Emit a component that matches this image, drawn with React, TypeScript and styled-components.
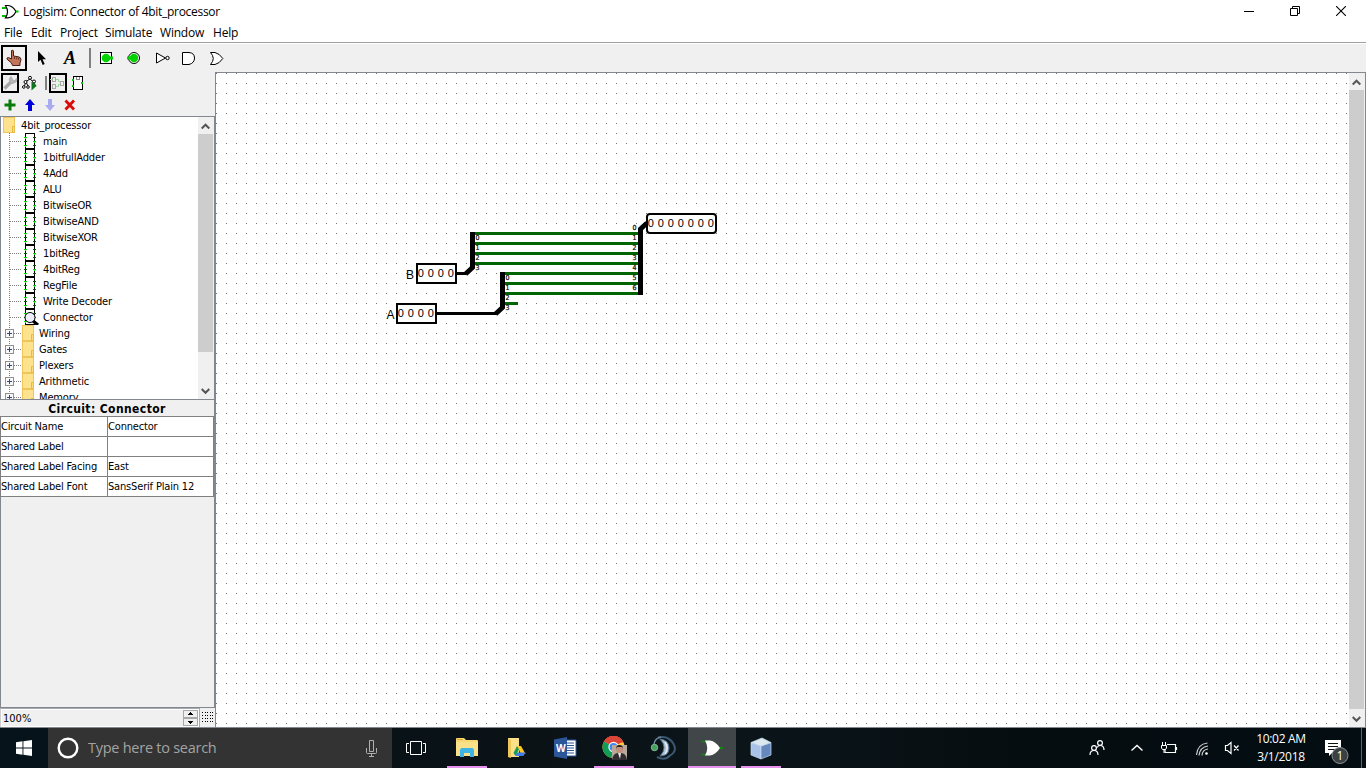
import React from "react";
import styled, { createGlobalStyle } from "styled-components";

const UI = `"DejaVu Sans Condensed", "DejaVu Sans", sans-serif`;
const SEGOE = `"Open Sans", "Noto Sans", sans-serif`;
const PLAIN = `"Liberation Sans", Arial, sans-serif`;
const EDGE = "#828790";

const Global = createGlobalStyle`
  * { box-sizing: border-box; }
  body { margin: 0; background: #fff; overflow: hidden; color: #000; }
  svg { display: block; flex: none; }
`;

const Screen = styled.div`
  width: 1366px;
  height: 768px;
  display: flex;
  flex-direction: column;
  overflow: hidden;
`;

const TitleBar = styled.header`
  height: 24px;
  display: flex;
  align-items: center;
  background: #fff;
`;
const Title = styled.div`
  flex: 1;
  margin-left: 4px;
  font: 12px/24px ${SEGOE};
  letter-spacing: -0.29px;
  white-space: pre;
`;
const WindowControls = styled.div`
  display: flex;
  gap: 36px;
  padding-right: 20px;
  margin-top: -3px;
`;

const MenuBar = styled.nav`
  height: 20px;
  display: flex;
  padding-left: 4px;
  background: #fff;
  box-shadow: inset 0 -1px #fff, inset 0 -2px #a0a0a0;
`;
const MenuItem = styled.span<{ $w: number }>`
  width: ${(p) => p.$w}px;
  font: 12px/18px ${SEGOE};
  letter-spacing: -0.2px;
  white-space: nowrap;
`;

const ToolBar = styled.div`
  height: 28px;
  flex: none;
  display: flex;
  background: #f0f0f0;
`;
const ToolSlot = styled.div<{ $on?: boolean }>`
  width: 28px;
  height: 28px;
  display: flex;
  align-items: center;
  justify-content: center;
  flex: none;
  box-shadow: ${(p) => (p.$on ? "inset 0 0 0 1px #f0f0f0, inset 0 0 0 3px #000" : "none")};
`;
const SmallSlot = styled.div<{ $on?: boolean }>`
  width: 18px;
  height: 20px;
  margin: 0 1px;
  display: flex;
  align-items: center;
  justify-content: center;
  flex: none;
  box-shadow: ${(p) => (p.$on ? "inset 0 0 0 2px #000" : "none")};
`;
const Divider = styled.div<{ $h: number; $m: string }>`
  width: 2px;
  height: ${(p) => p.$h}px;
  margin: ${(p) => p.$m};
  background: #808080;
`;
const TextTool = styled.span`
  font: italic bold 18px/30px "Liberation Serif", serif;
`;

const Body = styled.main`
  height: 656px;
  flex: none;
  display: flex;
  background: #f0f0f0;
`;
const Side = styled.aside`
  width: 215px;
  display: flex;
  flex-direction: column;
`;
const MiniBar = styled.div<{ $h: number; $top?: number }>`
  height: ${(p) => p.$h}px;
  padding-top: ${(p) => p.$top ?? 0}px;
  display: flex;
`;
const Explorer = styled.div`
  height: 284px;
  display: flex;
  border: 1px solid ${EDGE};
  background: #fff;
`;
const TreeView = styled.div`
  flex: 1;
  height: 282px;
  overflow: hidden;
`;
const TreeRow = styled.div<{ $gap: number }>`
  height: 16px;
  display: flex;
  font: 11px/18px ${UI};
  letter-spacing: -0.15px;
  white-space: pre;
  & > svg { margin-right: ${(p) => p.$gap}px; }
`;

const ScrollTrack = styled.div<{ $w: number }>`
  width: ${(p) => p.$w}px;
  display: flex;
  flex-direction: column;
  background: #f0f0f0;
`;
const ScrollButton = styled.div`
  height: 17px;
  flex: none;
  display: flex;
  align-items: center;
  justify-content: center;
  padding: 2px 2px 0 0;
`;
const Thumb = styled.div<{ $h: number }>`
  height: ${(p) => p.$h}px;
  margin-right: 1px;
  background: #cdcdcd;
`;
const Spacer = styled.div`
  flex: 1;
`;

const Attributes = styled.section`
  height: 308px;
  display: flex;
  flex-direction: column;
  border-right: 1px solid ${EDGE};
  border-bottom: 1px solid ${EDGE};
`;
const AttrTitle = styled.h2`
  margin: 0;
  height: 16px;
  text-align: center;
  font: bold 12px/18px ${UI};
  letter-spacing: 0.4px;
`;
const AttrGrid = styled.div`
  display: grid;
  grid-template-columns: 107px 106px;
  grid-auto-rows: 20px;
  width: 214px;
  border-left: 1px solid #808080;
  border-top: 1px solid #808080;
`;
const AttrCell = styled.div`
  background: #fff;
  border-right: 1px solid #808080;
  border-bottom: 1px solid #808080;
  font: 11px/19px ${UI};
  letter-spacing: -0.17px;
  white-space: nowrap;
`;
const AttrFill = styled.div`
  flex: 1;
  border-left: 1px solid ${EDGE};
`;
const ZoomRow = styled.div`
  height: 20px;
  display: flex;
  border-bottom: 1px solid ${EDGE};
`;
const ZoomBox = styled.div`
  width: 200px;
  display: flex;
  border: 1px solid #a9abb2;
  border-left-color: #ccc;
  border-bottom: 0;
  background: #f0f0f0;
  box-shadow: inset 0 0 0 1px #fff;
`;
const ZoomValue = styled.span`
  flex: 1;
  padding-left: 2px;
  font: 11px/19px ${UI};
`;
const GridToggle = styled.div`
  flex: 1;
  padding: 4px 0 0 2px;
`;

const Canvas = styled.section`
  flex: 1;
  display: flex;
  border: 1px solid ${EDGE};
  background: #fff;
`;

const Taskbar = styled.footer`
  height: 40px;
  flex: none;
  display: flex;
  color: #fff;
  background: linear-gradient(90deg, #06131a, #0a1216 38%, #0b1519 55%, #060d11 75%, #030d12);
`;
const StartButton = styled.div`
  width: 48px;
  flex: none;
  padding: 12px 0 0 16px;
`;
const SearchBox = styled.div`
  width: 344px;
  flex: none;
  display: flex;
  align-items: center;
  padding: 0 14px 0 9px;
  background: #333;
`;
const SearchHint = styled.span`
  flex: 1;
  margin-left: 9px;
  color: #a3a3a3;
  font: 14.5px/42px ${SEGOE};
  letter-spacing: -0.26px;
`;
const TaskList = styled.div`
  display: flex;
  flex: none;
  gap: 1px;
`;
const TaskItem = styled.div<{ $state?: "active" }>`
  width: 48px;
  height: 40px;
  display: flex;
  align-items: center;
  justify-content: center;
  background: ${(p) => (p.$state === "active" ? "#414648" : "transparent")};
  box-shadow: ${(p) => (p.$state === "active" ? "inset 0 -2px #e692ee" : "none")};
`;
const TaskView = styled(TaskItem)`
  margin-right: 2px;
`;
const OpenMark = styled.div`
  display: flex;
  align-items: center;
  justify-content: center;
  width: 40px;
  height: 40px;
  box-shadow: inset 0 -2px #e692ee;
`;
const Tray = styled.div`
  display: flex;
  flex: none;
  margin-left: 299px;
`;
const Clock = styled.div`
  width: 72px;
  padding-top: 2px;
  text-align: center;
  font: 12px/18px ${SEGOE};
  letter-spacing: -0.3px;
`;

const Chevron = ({ down = false }: { down?: boolean }) => (
  <svg width="9" height="7" viewBox="0 0 9 7">
    <path d={down ? "M.7 1l3.8 3.8L8.3 1" : "M.7 5.5l3.8-3.8 3.8 3.8"} fill="none" stroke="#555" strokeWidth="2" />
  </svg>
);

const OrGate = () => (
  <svg width="19" height="17" viewBox="0 0 19 17" fill="none">
    <path d="M2 4h5M2 12h5" stroke="#00c000" strokeWidth="2" />
    <path d="M5.500 1.500h2.500q5 .5 8 6-3 6-8 6.300H5.500q4-6 0-12.300z" fill="#fff" stroke="#000" strokeWidth="1.200" />
    <path d="M16 7.500h2.500" stroke="#00c000" strokeWidth="2" />
  </svg>
);

const Hand = () => (
  <svg width="16" height="18" viewBox="0 0 16 18">
    <path d="M5.500 1.500q1.500-1 2 .500v5l5 .800q2.500.500 2.500 3l-1 3.200v2.500H6.500L5.500 14 1 10.200q-.500-1.700 1.500-1.700l3 1.500z" fill="#c27558" stroke="#482018" strokeWidth="1" />
    <path d="M8.500 8v2M10.700 8.300v2M12.700 8.700v2" stroke="#482018" strokeWidth=".8" />
  </svg>
);

const Cursor = () => (
  <svg width="10" height="15" viewBox="0 0 10 15">
    <path d="M1 0v11l2.500-2.300L5.700 14l2-1-2.200-4.700H9z" fill="#000" />
  </svg>
);

const InputPin = () => (
  <svg width="16" height="14" viewBox="0 0 16 14">
    <rect x="2.500" y="1.500" width="11" height="11" fill="#fff" stroke="#000" />
    <circle cx="8" cy="7" r="4.300" fill="#00d400" />
    <path d="M11 7h4" stroke="#00d400" strokeWidth="3" />
  </svg>
);

const OutputPin = () => (
  <svg width="16" height="14" viewBox="0 0 16 14">
    <circle cx="8" cy="7" r="5.500" fill="#fff" stroke="#000" />
    <circle cx="8" cy="7" r="4.200" fill="#00d400" />
    <path d="M1 7h4" stroke="#00d400" strokeWidth="3" />
  </svg>
);

const NotGate = () => (
  <svg width="16" height="14" viewBox="0 0 16 14" fill="#fff" stroke="#000">
    <path d="M2.500 2v10l9-5z" />
    <circle cx="13.500" cy="7" r="1.700" />
  </svg>
);

const AndGate = () => (
  <svg width="16" height="16" viewBox="0 0 16 16" fill="#fff" stroke="#000">
    <path d="M.5 2.500H7q5.500.500 5.500 5.500T7 14.500H.5z" />
  </svg>
);

const OrShape = () => (
  <svg width="16" height="16" viewBox="0 0 16 16" fill="#fff" stroke="#000">
    <path d="M.5 2.500H5Q9.500 3.500 12.800 8.500 9.500 13.500 5 14.500H.5q5.500-6 0-12z" />
  </svg>
);

const Wrench = () => (
  <svg width="16" height="16" viewBox="0 0 16 16">
    <path d="M2.500 13.500l7-7" stroke="#a8a8a8" strokeWidth="3.400" />
    <path d="M9 1.500Q6 4 8 7.500q3 2.500 6.500-1l.5-3-2.500 2-2-.5-.500-2z" fill="#b8b8b8" stroke="#a8a8a8" strokeWidth=".7" />
  </svg>
);

const SimTree = () => (
  <svg width="16" height="16" viewBox="0 0 16 16" fill="#fff" stroke="#000">
    <path d="M8 4L4 6.500 2.500 11M8 4l3 2.500M4 7l2 4M11 7l3 4" />
    <circle cx="8" cy="2.800" r="1.500" />
    <circle cx="3.500" cy="7" r="1.500" />
    <circle cx="12" cy="6.500" r="1.500" />
    <circle cx="1.800" cy="12" r="1.300" />
    <circle cx="6" cy="12" r="1.300" />
    <path d="M9.500 6.500v9l5-4.500z" fill="#087818" stroke="none" />
  </svg>
);

const LayoutIcon = () => (
  <svg width="16" height="16" viewBox="0 0 16 16" fill="none" shapeRendering="crispEdges">
    <path d="M5 4.500h3.500v2H11M5 11.500h3.500v-2H11M0 4.500h3" stroke="#9fe09f" />
    <path d="M2.500 2.500h3v4h-3zM2.500 9.500h3v4h-3zM10.500 6.500h3v4h-3z" stroke="#a8a8a8" />
  </svg>
);

const AppearanceIcon = () => (
  <svg width="14" height="16" viewBox="0 0 14 16" shapeRendering="crispEdges">
    <rect x="2" y="1.500" width="9" height="13" fill="#fff" stroke="#000" />
    <path d="M5 2v2h3V2" fill="none" stroke="#888" />
    <path d="M1 5h2M1 11h2M10 8h2" stroke="#00c800" strokeWidth="2" />
  </svg>
);

const Plus = () => (
  <svg width="14" height="14" viewBox="0 0 14 14">
    <path d="M7 1.500v11M1.500 7h11" stroke="#087b08" strokeWidth="3" />
  </svg>
);

const Arrow = ({ color, down = false }: { color: string; down?: boolean }) => (
  <svg width="14" height="14" viewBox="0 0 14 14">
    <path d={down ? "M5 1h4v6h3l-5 6-5-6h3z" : "M5 13h4V7h3L7 1 2 7h3z"} fill={color} />
  </svg>
);

const Cross = () => (
  <svg width="14" height="14" viewBox="0 0 14 14">
    <path d="M2.500 2.500l8.500 9M11 2.500l-8.500 9" stroke="#dc0a0a" strokeWidth="2.800" />
  </svg>
);

const CircuitRowIcon = ({ viewed = false }: { viewed?: boolean }) => (
  <svg width="38" height="16" viewBox="0 0 38 16" shapeRendering="crispEdges">
    <path d="M8.500 0v16" stroke="#808080" strokeDasharray="1 1" />
    <path d="M9 8.500h11" stroke="#808080" strokeDasharray="1 1" />
    <rect x="24.500" y=".5" width="9" height="15" fill="#fff" stroke="#000" />
    <path d="M23 4.500h3M23 12.500h3M32 8.500h3" stroke="#00e000" />
    <path d="M24 4h1v2h-1zM24 12h1v2h-1zM33 8h1v2h-1z" fill="#00e000" />
    <path d="M23 8.500h3M32 4.500h3M32 12.500h3" stroke="#006400" />
    {viewed && (
      <g shapeRendering="auto">
        <path d="M32 12l5 4" stroke="#000" strokeWidth="3" />
        <circle cx="29" cy="8.500" r="5" fill="#eeeeff" stroke="#000" strokeWidth="1" />
      </g>
    )}
  </svg>
);

const FolderShape = ({ x }: { x: number }) => (
  <g>
    <rect x={x + 0.5} y=".5" width="11" height="15" fill="#ffe28e" stroke="#edc65b" />
    <rect x={x + 9.500} y="9.500" width="2" height="6" fill="#ffdc7b" stroke="#e7bc46" />
  </g>
);

const LibraryRowIcon = () => (
  <svg width="35" height="16" viewBox="0 0 35 16" shapeRendering="crispEdges">
    <path d="M8.500 0v16M13 8.500h7" stroke="#808080" strokeDasharray="1 1" />
    <rect x="4.500" y="4.500" width="8" height="8" fill="#f8f8f8" stroke="#919191" />
    <path d="M6 8.500h5M8.500 6v5" stroke="#33497f" />
    <FolderShape x={21} />
  </svg>
);

const RootIcon = () => (
  <svg width="16" height="16" viewBox="0 0 16 16" shapeRendering="crispEdges">
    <FolderShape x={2} />
  </svg>
);

const circuits = ["main", "1bitfullAdder", "4Add", "ALU", "BitwiseOR", "BitwiseAND", "BitwiseXOR", "1bitReg", "4bitReg", "RegFile", "Write Decoder", "Connector"];
const libraries = ["Wiring", "Gates", "Plexers", "Arithmetic", "Memory"];
const attributes = [
  ["Circuit Name", "Connector"],
  ["Shared Label", ""],
  ["Shared Label Facing", "East"],
  ["Shared Label Font", "SansSerif Plain 12"],
];
const menus: [string, number][] = [["File", 27], ["Edit", 29], ["Project", 45], ["Simulate", 55], ["Window", 53], ["Help", 30]];

const Digits = ({ x, y, count }: { x: number; y: number; count: number }) => (
  <g fontFamily={PLAIN} fontSize="11" textAnchor="middle">
    {Array.from({ length: count }, (_, i) => (
      <text key={i} x={x + i * 10} y={y}>0</text>
    ))}
  </g>
);

const BitLabels = ({ x, y, count }: { x: number; y: number; count: number }) => (
  <g fontFamily={UI} fontSize="7" textAnchor="middle" stroke="#000" strokeWidth=".2">
    {Array.from({ length: count }, (_, i) => (
      <text key={i} x={x} y={y + i * 10}>{i}</text>
    ))}
  </g>
);

/* The drawing area keeps window coordinates, so grid points fall on x = 6, y = 3 (mod 10). */
const Schematic = () => (
  <svg width="1133" height="654" viewBox="216 73 1133 654">
    <defs>
      <pattern id="grid" x="6" y="3" width="10" height="10" patternUnits="userSpaceOnUse">
        <rect width="1" height="1" fill="#777" />
      </pattern>
    </defs>
    <rect x="216" y="73" width="1133" height="654" fill="url(#grid)" />
    <g stroke="#006400" strokeWidth="3">
      {[233.5, 243.5, 253.5, 263.5].map((y) => <path key={y} d={`M475 ${y}H639`} />)}
      {[273.5, 283.5, 293.5].map((y) => <path key={y} d={`M505 ${y}H639`} />)}
      <path d="M505 303.500H518" />
    </g>
    <g stroke="#000" fill="none">
      <path d="M457 273.500H466M437 313.500H496" strokeWidth="3" />
      <path d="M472.500 232V267.500L465.500 274M502.500 272V307.500L495.500 314M640.500 295V229L647 223" strokeWidth="5" />
    </g>
    <g stroke="#000" strokeWidth="2" fill="#fff">
      <rect x="417" y="264" width="39" height="19" />
      <rect x="397" y="304" width="39" height="19" />
      <rect x="647" y="214" width="69" height="19" rx="3" />
    </g>
    <Digits x={420.8} y={277} count={4} />
    <Digits x={400.8} y={317} count={4} />
    <Digits x={650.8} y={227} count={7} />
    <BitLabels x={477.5} y={240} count={4} />
    <BitLabels x={507.5} y={280} count={4} />
    <BitLabels x={634.5} y={230} count={7} />
    <g fontFamily={PLAIN} fontSize="12">
      <text x="406" y="279">B</text>
      <text x="386.500" y="319">A</text>
    </g>
  </svg>
);

const Explore = () => (
  <svg width="24" height="22" viewBox="0 0 24 22">
    <path d="M1 2q0-1 1-1h7l2 2h11q1 0 1 1v15H1z" fill="#f8d775" />
    <path d="M1 5h22v14H1z" fill="#fbe08a" />
    <path d="M2 2.500h6" stroke="#e0a82e" />
    <path d="M5 20v-6q0-3 2-3h10q2 0 2 3v6h-4v-4H9v4z" fill="#3db4e6" />
  </svg>
);
const Drive = () => (
  <svg width="20" height="22" viewBox="0 0 20 22">
    <path d="M2 1h11v19H2z" fill="#fbe08a" />
    <path d="M2 1l3 2v18l-3-1z" fill="#eec75c" />
    <path d="M11 9h4l4.500 8h-4.500z" fill="#ffc925" />
    <path d="M11 9l2 3.500L9.500 19l-2-3z" fill="#199b57" />
    <path d="M11 15.500h8.500l-2 3.500h-8z" fill="#3f7de8" />
  </svg>
);
const Word = () => (
  <svg width="24" height="24" viewBox="0 0 24 24">
    <path d="M11 4h12v16H11z" fill="#fff" stroke="#2b579a" />
    <path d="M14 7h7M14 9.500h7M14 12h7M14 14.500h7M14 17h7" stroke="#2b579a" />
    <path d="M1 3.500L14 1v22L1 20.500z" fill="#2b579a" />
    <text x="3" y="16" fill="#fff" fontFamily="Open Sans, sans-serif" fontWeight="700" fontSize="10">W</text>
  </svg>
);
const Chrome = () => (
  <svg width="27" height="26" viewBox="0 0 27 26">
    <circle cx="12.500" cy="12" r="11" fill="#f7cd3a" />
    <path d="M12.500 12L3 6.500a11 11 0 0 1 19 0z" fill="#db4437" />
    <path d="M12.500 12L3 6.500a11 11 0 0 0 7.500 16.300z" fill="#0f9d58" />
    <path d="M3 6.500a11 11 0 0 1 19.500 1H12z" fill="#db4437" />
    <circle cx="12.500" cy="12" r="5.200" fill="#fff" />
    <circle cx="12.500" cy="12" r="4" fill="#4285f4" />
    <path d="M11 10h15v15H11z" fill="#b6a99c" />
    <path d="M11 25q1-7 6-7h3q5 0 6 7z" fill="#302c31" />
    <path d="M17 18h3l-1 6z" fill="#f0e9e5" />
    <circle cx="18.500" cy="14.500" r="3.400" fill="#c38f7b" />
    <path d="M15 14q0-4 3.500-4t3.500 4l-1-2h-5z" fill="#2b211e" />
  </svg>
);
const TeamSpeak = () => (
  <svg width="26" height="26" viewBox="0 0 26 26" fill="none">
    <path d="M8 2.500Q18 0 23 8t-3 12.500Q15 26 7 22" stroke="#3c5874" strokeWidth="2" />
    <path d="M10 4q9 1 9 9t-9 8q4-4 4-8.500T10 4z" fill="#a9bfd1" stroke="#54718d" />
    <path d="M15 7q4 6 0 12" stroke="#e2edf4" strokeWidth="1.500" />
    <path d="M4 9q1-6 7-7" stroke="#6c8499" strokeWidth="1.500" />
    <circle cx="4.500" cy="12.500" r="3.200" fill="#43a35b" stroke="#8bb79a" />
  </svg>
);
const LogisimTask = () => (
  <svg width="24" height="20" viewBox="0 0 24 20">
    <path d="M1 3.500h5M1 16.500h5" stroke="#0b8b0b" strokeWidth="1.500" />
    <path d="M5 2.500h5q6 1 10 7.500-4 6.500-10 7.500H5q4.500-7.500 0-15z" fill="#fff" />
    <path d="M20 10h3" stroke="#0b8b0b" strokeWidth="2" />
  </svg>
);
const Cube = () => (
  <svg width="24" height="24" viewBox="0 0 24 24" stroke="#c7dcf5" strokeWidth=".7">
    <path d="M2 6.500L12 10v13L2 19z" fill="#a9c2e7" />
    <path d="M22 6.500L12 10v13l10-4z" fill="#6788bd" />
    <path d="M2 6.500L13 2l9 4.500L12 10z" fill="#dce9ec" />
  </svg>
);

export default function App() {
  return (
    <Screen>
      <Global />
      <TitleBar>
        <OrGate />
        <Title>Logisim: Connector of 4bit_processor</Title>
        <WindowControls>
          <svg width="10" height="10"><path d="M0 5.500h10" stroke="#000" /></svg>
          <svg width="10" height="10" fill="none" stroke="#000"><path d="M.5 2.500h7v7h-7zM2.500 2V.5h7v7H8" /></svg>
          <svg width="10" height="10" stroke="#000"><path d="M0 0l10 10M10 0L0 10" strokeWidth="1.100" /></svg>
        </WindowControls>
      </TitleBar>
      <MenuBar>
        {menus.map(([name, w]) => <MenuItem key={name} $w={w}>{name}</MenuItem>)}
      </MenuBar>
      <ToolBar>
        <ToolSlot $on><Hand /></ToolSlot>
        <ToolSlot><Cursor /></ToolSlot>
        <ToolSlot><TextTool>A</TextTool></ToolSlot>
        <Divider $h={20} $m="4px 1px 0 5px" />
        <ToolSlot><InputPin /></ToolSlot>
        <ToolSlot><OutputPin /></ToolSlot>
        <ToolSlot><NotGate /></ToolSlot>
        <ToolSlot><AndGate /></ToolSlot>
        <ToolSlot><OrShape /></ToolSlot>
      </ToolBar>
      <Body>
        <Side>
          <MiniBar $h={23} $top={1}>
            <SmallSlot $on><Wrench /></SmallSlot>
            <SmallSlot><SimTree /></SmallSlot>
            <Divider $h={14} $m="3px 1px 0 5px" />
            <SmallSlot $on><LayoutIcon /></SmallSlot>
            <SmallSlot><AppearanceIcon /></SmallSlot>
          </MiniBar>
          <MiniBar $h={21}>
            <SmallSlot><Plus /></SmallSlot>
            <SmallSlot><Arrow color="#0000dc" /></SmallSlot>
            <SmallSlot><Arrow color="#aaaaf0" down /></SmallSlot>
            <SmallSlot><Cross /></SmallSlot>
          </MiniBar>
          <Explorer>
            <TreeView>
              <TreeRow $gap={4}><RootIcon />4bit_processor</TreeRow>
              {circuits.map((name) => (
                <TreeRow key={name} $gap={4}>
                  <CircuitRowIcon viewed={name === "Connector"} />
                  {name}
                </TreeRow>
              ))}
              {libraries.map((name) => (
                <TreeRow key={name} $gap={3}><LibraryRowIcon />{name}</TreeRow>
              ))}
            </TreeView>
            <ScrollTrack $w={16}>
              <ScrollButton><Chevron /></ScrollButton>
              <Thumb $h={218} />
              <Spacer />
              <ScrollButton><Chevron down /></ScrollButton>
            </ScrollTrack>
          </Explorer>
          <Attributes>
            <AttrTitle>Circuit: Connector</AttrTitle>
            <AttrGrid>
              {attributes.map(([name, value]) => (
                <React.Fragment key={name}>
                  <AttrCell>{name}</AttrCell>
                  <AttrCell>{value}</AttrCell>
                </React.Fragment>
              ))}
            </AttrGrid>
            <AttrFill />
          </Attributes>
          <ZoomRow>
            <ZoomBox>
              <ZoomValue>100%</ZoomValue>
              <svg width="16" height="18" viewBox="0 0 16 18" shapeRendering="crispEdges">
                <path d="M.5 1.500h14v7H.5zM.5 9.500h14v7H.5z" fill="#f0f0f0" stroke="#a8a8a8" />
                <path d="M5 6h5L7.500 3zM5 12h5l-2.500 3z" />
              </svg>
            </ZoomBox>
            <GridToggle>
              <svg width="13" height="12" viewBox="0 0 13 12" shapeRendering="crispEdges">
                <path d="M0 .5h11M0 3.500h11M0 6.500h11M0 9.500h11" stroke="#000" strokeDasharray="1 1.500" />
              </svg>
            </GridToggle>
          </ZoomRow>
        </Side>
        <Canvas>
          <Schematic />
          <ScrollTrack $w={16}>
            <ScrollButton><Chevron /></ScrollButton>
            <Thumb $h={619} />
            <Spacer />
            <ScrollButton><Chevron down /></ScrollButton>
          </ScrollTrack>
        </Canvas>
      </Body>
      <Taskbar>
        <StartButton>
          <svg width="16" height="16" viewBox="0 0 16 16" fill="#fff">
            <path d="M0 2.200L6.500 1.300v6.200H0zM7.400 1.200L16 0v7.500H7.400zM0 8.400h6.500v6.300L0 13.800zM7.400 8.400H16V16l-8.600-1.200z" />
          </svg>
        </StartButton>
        <SearchBox>
          <svg width="22" height="22"><circle cx="11" cy="11" r="9.300" fill="none" stroke="#fff" strokeWidth="2.400" /></svg>
          <SearchHint>Type here to search</SearchHint>
          <svg width="13" height="17" viewBox="0 0 13 17" fill="none" stroke="#b0b0b0">
            <path d="M4.500.5h4v11h-4zM1.500 8v4.500q0 1 1 1h8q1 0 1-1V8M6.500 14v2.500M4 16.500h5" />
          </svg>
        </SearchBox>
        <TaskList>
          <TaskView>
            <svg width="20" height="14" fill="none" stroke="#fff"><path d="M4.500.5h11v13h-11zM3 2.500H.5v9H3M17 2.500h2.500v9H17" /></svg>
          </TaskView>
          <TaskItem><OpenMark><Explore /></OpenMark></TaskItem>
          <TaskItem><Drive /></TaskItem>
          <TaskItem><Word /></TaskItem>
          <TaskItem><OpenMark><Chrome /></OpenMark></TaskItem>
          <TaskItem><TeamSpeak /></TaskItem>
          <TaskItem $state="active"><LogisimTask /></TaskItem>
          <TaskItem><OpenMark><Cube /></OpenMark></TaskItem>
        </TaskList>
        <Tray>
          <svg width="161" height="40" viewBox="1084 728 161 40" fill="none" stroke="#fff" strokeWidth="1.200">
            <circle cx="1094" cy="748" r="2.400" />
            <path d="M1090 755q0-4.500 4-4.500t4 4.500" />
            <circle cx="1100" cy="743" r="2.400" />
            <path d="M1097 747.500q1.200-2 3-2 4 0 4 4.500" />
            <path d="M1131.500 750.500l5.500-5 5.500 5" strokeWidth="1.400" />
            <path d="M1167 744.500h8.500v8H1165V749M1176.500 747v3" />
            <path d="M1161.500 745.500h5v2.500l-1 1.500h-3l-1-1.500zM1162.500 742v3M1165.500 742v3M1164 750v3" strokeWidth="1" />
            <path d="M1196.500 755q1-11 11-12M1199 755.500q1-8.500 9-9.500M1202 755.500q.5-6 6-6.500" stroke="#ccc" />
            <circle cx="1206.500" cy="753.500" r="1.300" fill="#fff" stroke="none" />
            <path d="M1225.500 745.500h2l3.500-3v11l-3.500-3h-2zM1234 745.500l4.500 5M1238.500 745.500l-4.500 5" />
          </svg>
          <Clock>10:02 AM<br />3/1/2018</Clock>
          <svg width="49" height="40" viewBox="1317 728 49 40">
            <path d="M1325 740h16v13h-9l-3 3v-3h-4z" fill="#fff" />
            <path d="M1328 743.500h10M1328 746.500h10M1328 749.500h7" stroke="#0a1216" />
            <circle cx="1340" cy="755.500" r="8" fill="#3b4042" stroke="#8b8f91" />
            <text x="1340" y="760" fill="#fff" fontFamily="Open Sans, sans-serif" fontSize="12" textAnchor="middle">1</text>
            <path d="M1361.500 728v40" stroke="#5d6467" />
          </svg>
        </Tray>
      </Taskbar>
    </Screen>
  );
}
